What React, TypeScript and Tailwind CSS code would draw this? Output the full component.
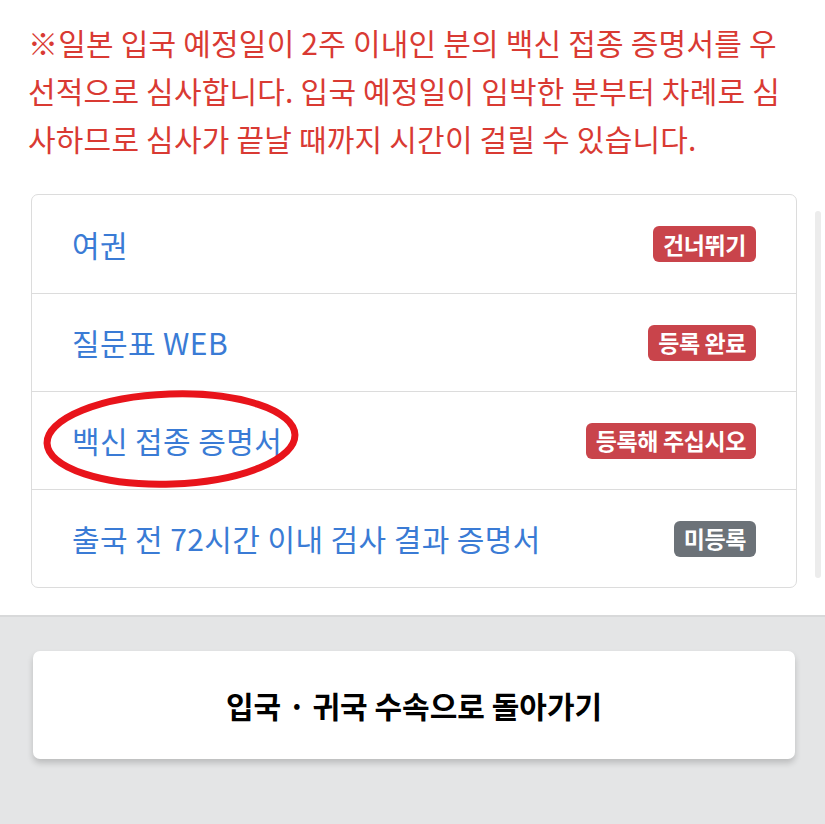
import React from "react";

const rows: { label: string; badge: string; tone: "red" | "gray" }[] = [
  { label: "여권", badge: "건너뛰기", tone: "red" },
  { label: "질문표 WEB", badge: "등록 완료", tone: "red" },
  { label: "백신 접종 증명서", badge: "등록해 주십시오", tone: "red" },
  { label: "출국 전 72시간 이내 검사 결과 증명서", badge: "미등록", tone: "gray" },
];

export default function App() {
  return (
    <div
      className="w-[825px] h-[824px] flex flex-col bg-white overflow-hidden"
      style={{ fontFamily: '"Noto Sans CJK KR", "Noto Sans", sans-serif' }}
    >
      <div className="relative bg-white pl-[28px] pr-[10px] pt-[18px] pb-[27px] border-b-2 border-[#d8d9da]">
        <p className="text-[30px] leading-[48px] text-[#d93a33] tracking-[0.2px] whitespace-nowrap">
          ※일본 입국 예정일이 2주 이내인 분의 백신 접종 증명서를 우<br />
          선적으로 심사합니다. 입국 예정일이 임박한 분부터 차례로 심<br />
          사하므로 심사가 끝날 때까지 시간이 걸릴 수 있습니다.
        </p>
        <div className="relative mt-[32px] ml-[3px] mr-[18px] border border-[#dcdcdc] rounded-[7px] bg-white">
          {rows.map((r, i) => (
            <div
              key={r.label}
              className={`h-[98px] flex items-center justify-between pl-[40px] pr-[40px] ${
                i > 0 ? "border-t border-[#dcdcdc]" : ""
              }`}
            >
              <span className="text-[30px] text-[#3a7bd5] tracking-[0.4px]">{r.label}</span>
              <span
                className={`h-[36px] px-[10px] flex items-center rounded-[6px] text-white font-bold text-[23px] tracking-[-0.4px] ${
                  r.tone === "red" ? "bg-[#c9444b]" : "bg-[#6c7278]"
                }`}
              >
                {r.badge}
              </span>
            </div>
          ))}
          <svg
            className="absolute pointer-events-none"
            style={{ left: 6, top: 193 }}
            width="270"
            height="104"
            viewBox="0 0 270 104"
          >
            <ellipse
              cx="133"
              cy="51"
              rx="124"
              ry="45"
              fill="none"
              stroke="#e8141b"
              strokeWidth="7"
              transform="rotate(-2 133 51)"
            />
          </svg>
        </div>
        <div className="absolute right-[4px] top-[211px] w-[6px] h-[367px] bg-[#ececec] rounded-sm" />
      </div>
      <div className="flex-1 bg-[#e4e5e6] pt-[34px] pl-[33px] pr-[30px]">
        <div className="h-[108px] rounded-[7px] bg-white shadow-[0_4px_6px_rgba(0,0,0,0.18)] flex items-center justify-center">
          <span className="text-[30px] font-bold text-black tracking-[0px]">입국 · 귀국 수속으로 돌아가기</span>
        </div>
      </div>
    </div>
  );
}
